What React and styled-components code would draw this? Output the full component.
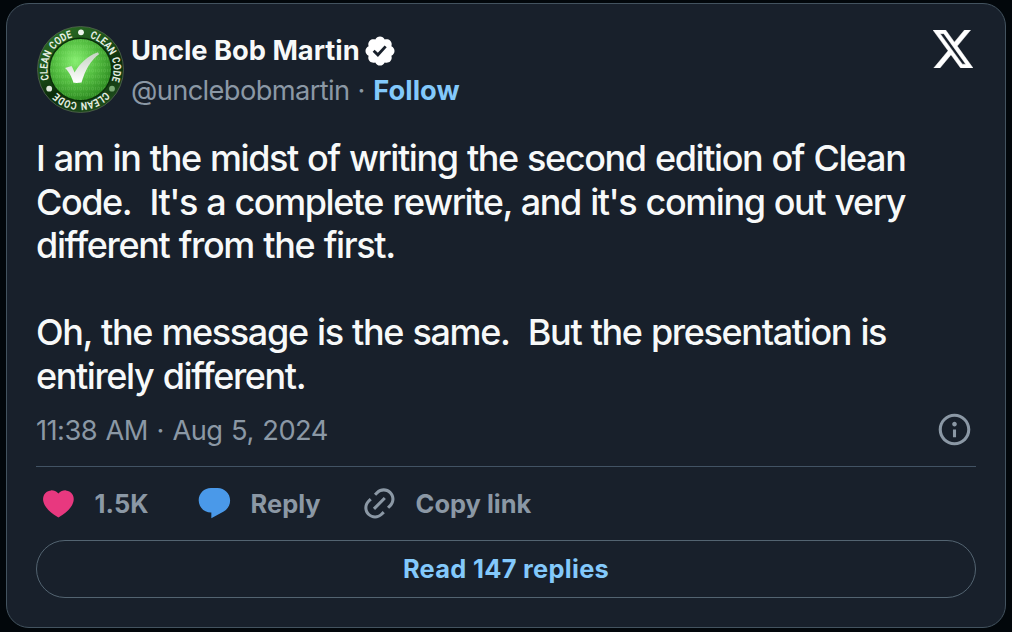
import React from "react";
import styled, { createGlobalStyle } from "styled-components";

const Global = createGlobalStyle`
  * { box-sizing: border-box; }
  html, body { margin: 0; background: #02070b; }
  body { font-family: Inter, "Liberation Sans", sans-serif; -webkit-font-smoothing: antialiased; }
`;

const Page = styled.main`
  height: 632px;
  padding: 3px 6px 4px;
  background: #02070b;
  overflow: hidden;
`;

const Card = styled.article`
  width: 1000px;
  height: 625px;
  padding: 22px 29px 0;
  border: 1px solid #43535f;
  border-radius: 23px;
  background: #18202b;
  color: #f7f9f9;
`;

const Header = styled.header`
  display: flex;
  height: 88px;
  padding-left: 1px;
`;

const Identity = styled.div`
  flex: 1;
  padding: 5px 0 0 7px;
`;

const Line = styled.div`
  display: flex;
  align-items: center;
  height: ${(p) => p.$h}px;
  gap: ${(p) => p.$gap || 0}px;
`;

const Text = styled.span`
  font-size: ${(p) => p.$size || 27.27}px;
  line-height: 36px;
  white-space: pre;
  font-weight: ${(p) => p.$weight || 430};
  letter-spacing: ${(p) => p.$track || 0}px;
  word-spacing: ${(p) => p.$word || 0}px;
  color: ${(p) => p.$color || "#8b98a5"};
`;

const ActionText = styled(Text)`
  padding-top: 2px;
`;

const Glyph = styled.svg`
  display: block;
  flex: none;
  fill: ${(p) => p.$fill};
`;

const LogoBox = styled.div`
  padding: 4px 3px 0 0;
`;

const Body = styled.div`
  margin-top: 23px;
  font-size: 36px;
  font-weight: 450;
  line-height: 43.6px;
  word-spacing: 1.1px;
`;

const BodyLine = styled.p`
  margin: 0;
  height: 43.6px;
  white-space: pre;
  letter-spacing: ${(p) => p.$track}px;
`;

const Meta = styled.div`
  display: flex;
  align-items: center;
  justify-content: space-between;
  height: 36px;
  margin-top: 14.24px;
  padding-right: 3px;
`;

const InfoBox = styled.div`
  padding-bottom: 3px;
`;

const Divider = styled.hr`
  height: 1px;
  margin: 17px 0 0;
  border: 0;
  background: #425364;
`;

const Actions = styled.div`
  display: flex;
  height: 73px;
  padding-left: 3.8px;
`;

const Action = styled.div`
  display: flex;
  align-items: center;
  height: 73px;
  width: ${(p) => p.$w}px;
  gap: 18px;
`;

const Replies = styled.div`
  display: flex;
  align-items: center;
  justify-content: center;
  height: 58px;
  border: 1px solid #536471;
  border-radius: 29px;
`;

const RingLabel = styled.text`
  font-family: Roboto, "Liberation Sans", sans-serif;
  font-size: 10.8px;
  font-weight: 700;
  word-spacing: 1px;
  fill: #e6efe4;
`;

const VERIFIED =
  "M22.25 12c0-1.43-.88-2.67-2.19-3.34.46-1.39.2-2.9-.81-3.91s-2.52-1.27-3.91-.81c-.66-1.31-1.91-2.19-3.34-2.19s-2.67.88-3.33 2.19c-1.4-.46-2.91-.2-3.92.81s-1.26 2.52-.8 3.91c-1.31.67-2.2 1.91-2.2 3.34s.89 2.67 2.2 3.34c-.46 1.39-.21 2.9.8 3.91s2.52 1.26 3.91.81c.67 1.31 1.91 2.19 3.34 2.19s2.68-.88 3.34-2.19c1.39.45 2.9.2 3.91-.81s1.27-2.52.81-3.91c1.31-.67 2.19-1.91 2.19-3.34zm-11.71 4.2L6.8 12.46l1.41-1.42 2.26 2.26 4.8-5.23 1.47 1.36-6.2 6.77z";
const XLOGO =
  "M18.244 2.25h3.308l-7.227 8.26 8.502 11.24H16.17l-5.214-6.817L4.99 21.75H1.68l7.73-8.835L1.254 2.25H8.08l4.713 6.231zm-1.161 17.52h1.833L7.084 4.126H5.117z";
const HEART =
  "M20.884 13.19c-1.351 2.48-4.001 5.12-8.379 7.67l-.503.3-.504-.3c-4.379-2.55-7.029-5.19-8.382-7.67-1.36-2.5-1.41-4.86-.514-6.67.887-1.79 2.647-2.91 4.601-3.01 1.651-.09 3.368.56 4.798 2.01 1.429-1.45 3.146-2.1 4.796-2.01 1.954.1 3.714 1.22 4.601 3.01.896 1.81.846 4.17-.514 6.67z";
const REPLY =
  "M1.751 10c0-4.42 3.584-8 8.005-8h4.366c4.49 0 8.129 3.64 8.129 8.13 0 2.96-1.607 5.68-4.196 7.11l-8.054 4.46v-3.69h-.067c-4.49.1-8.183-3.51-8.183-8.01z";
const LINK =
  "M18.36 5.64c-1.95-1.96-5.11-1.96-7.07 0L9.88 7.05 8.46 5.64l1.42-1.42c2.73-2.73 7.16-2.73 9.9 0 2.73 2.74 2.73 7.17 0 9.9l-1.42 1.42-1.41-1.42 1.41-1.41c1.96-1.96 1.96-5.12 0-7.07zm-2.12 3.53l-7.07 7.07-1.41-1.41 7.07-7.07 1.41 1.41zm-12.02.71l1.42-1.42 1.41 1.42-1.41 1.41c-1.96 1.96-1.96 5.12 0 7.07 1.95 1.96 5.11 1.96 7.07 0l1.41-1.41 1.42 1.41-1.42 1.42c-2.73 2.73-7.16 2.73-9.9 0-2.73-2.74-2.73-7.17 0-9.9z";
const INFO =
  "M13.5 8.5c0 .83-.67 1.5-1.5 1.5s-1.5-.67-1.5-1.5S11.17 7 12 7s1.5.67 1.5 1.5zM13 17v-5h-2v5h2zm-1 5.25c5.66 0 10.25-4.59 10.25-10.25S17.66 1.75 12 1.75 1.75 6.34 1.75 12 6.34 22.25 12 22.25zM20.25 12c0 4.56-3.69 8.25-8.25 8.25S3.75 16.56 3.75 12 7.44 3.75 12 3.75s8.25 3.69 8.25 8.25z";

function Icon({ d, size, fill }) {
  return (
    <Glyph width={size} height={size} viewBox="0 0 24 24" $fill={fill}>
      <path d={d} />
    </Glyph>
  );
}

function Avatar() {
  return (
    <Glyph width="87" height="87" viewBox="0 0 87 87">
      <defs>
        <linearGradient id="ring" x1="0" y1="0" x2="0.5" y2="1">
          <stop offset="0" stopColor="#2c7226" />
          <stop offset="0.45" stopColor="#1d521a" />
          <stop offset="0.7" stopColor="#0b2d0a" />
          <stop offset="1" stopColor="#1c4a1a" />
        </linearGradient>
        <radialGradient id="ball" cx="0.42" cy="0.36" r="0.66">
          <stop offset="0" stopColor="#86ee70" />
          <stop offset="0.5" stopColor="#55bf42" />
          <stop offset="1" stopColor="#2d8a21" />
        </radialGradient>
        <linearGradient id="tick" x1="0" y1="0" x2="0" y2="1">
          <stop offset="0" stopColor="#c6d2c3" />
          <stop offset="1" stopColor="#ffffff" />
        </linearGradient>
        <pattern id="bits" width="6" height="6" patternUnits="userSpaceOnUse">
          <ellipse cx="1.6" cy="2.6" rx="1" ry="1.6" fill="none" stroke="#a5f58f" strokeWidth="0.6" />
          <path d="M4.6 1v3.2" stroke="#a5f58f" strokeWidth="0.6" />
        </pattern>
        <path id="orbit" d="M43.5 10.5a33 33 0 1 1-.01 0" />
      </defs>
      <circle cx="43.5" cy="43.5" r="43" fill="url(#ring)" stroke="#53654f" strokeWidth="0.8" />
      <circle cx="43.5" cy="43.5" r="32" fill="#0b300a" />
      <circle cx="43.5" cy="43.5" r="30.5" fill="url(#ball)" />
      <circle cx="43.5" cy="43.5" r="30.5" fill="url(#bits)" opacity="0.3" />
      <path d="M28 42l6.5-2c1.5 2.5 2.3 4.5 3 6.5C43 37.5 50 30 61 26.2l1 2C54 34 48.5 43 44.5 56.5c-3 .5-5.5.5-8 .3-2-6-4-10.5-8.5-14.8z" fill="url(#tick)" />
      {[
        [44, 6.3, "#eef4ec"],
        [75, 62.7, "#7aa874"],
        [12.2, 62.7, "#dfe8dd"],
      ].map(([x, y, c]) => (
        <circle key={x} cx={x} cy={y} r="2.9" fill={c} />
      ))}
      {[9.5, 75.7, 145].map((start) => (
        <RingLabel key={start}>
          <textPath href="#orbit" startOffset={start} textLength="53.5" lengthAdjust="spacingAndGlyphs">
            CLEAN CODE
          </textPath>
        </RingLabel>
      ))}
    </Glyph>
  );
}

const LINES = [
  ["I am in the midst of writing the second edition of Clean", -1.41],
  ["Code.  It's a complete rewrite, and it's coming out very", -1.43],
  ["different from the first.", -1.36],
  ["", 0],
  ["Oh, the message is the same.  But the presentation is", -1.36],
  ["entirely different.", -1.4],
];

export default function App() {
  return (
    <>
      <Global />
      <Page>
        <Card>
          <Header>
            <Avatar />
            <Identity>
              <Line $h={40} $gap={3}>
                <Text $weight={700} $color="#f7f9f9">Uncle Bob Martin</Text>
                <Icon d={VERIFIED} size={34} fill="#ffffff" />
              </Line>
              <Line $h={40} $gap={8}>
                <Text $track={-0.63}>@unclebobmartin</Text>
                <Text>·</Text>
                <Text $weight={700} $color="#83c9fb">Follow</Text>
              </Line>
            </Identity>
            <LogoBox>
              <Glyph width="40" height="38" viewBox="1.254 2.25 21.573 19.5" preserveAspectRatio="none" $fill="#ffffff">
                <path d={XLOGO} stroke="#ffffff" strokeWidth="0.25" />
              </Glyph>
            </LogoBox>
          </Header>
          <Body>
            {LINES.map(([t, track], i) => (
              <BodyLine key={i} $track={track}>{t}</BodyLine>
            ))}
          </Body>
          <Meta>
            <Text $track={-0.55} $word={1.5}>11:38 AM · Aug 5, 2024</Text>
            <InfoBox>
              <Icon d={INFO} size={37} fill="#8b98a5" />
            </InfoBox>
          </Meta>
          <Divider />
          <Actions>
            <Action $w={156}>
              <Icon d={HEART} size={36.8} fill="#e8387f" />
              <ActionText $size={25.45} $weight={700}>1.5K</ActionText>
            </Action>
            <Action $w={165}>
              <Icon d={REPLY} size={36.8} fill="#4a99e9" />
              <ActionText $size={25.45} $weight={700}>Reply</ActionText>
            </Action>
            <Action $w={200}>
              <Icon d={LINK} size={36.8} fill="#8b98a5" />
              <ActionText $size={25.45} $weight={700}>Copy link</ActionText>
            </Action>
          </Actions>
          <Replies>
            <Text $size={25.45} $track={0.28} $weight={700} $color="#83c9fb">Read 147 replies</Text>
          </Replies>
        </Card>
      </Page>
    </>
  );
}
